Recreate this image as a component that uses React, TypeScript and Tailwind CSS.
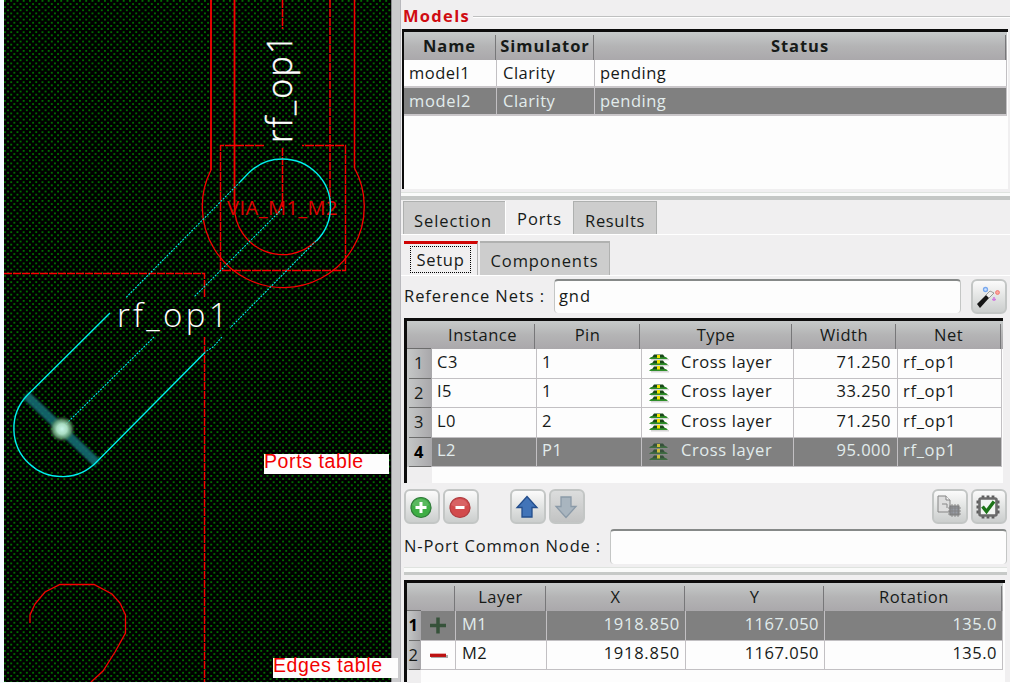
import React from "react";

const HEAD = "bg-gradient-to-b from-[#c6caca] via-[#b4b4b5] to-[#aaa8ab]";

function HeadCell({ w, children, bold }: { w: string; children?: React.ReactNode; bold?: boolean }) {
  return (
    <div className={`${w} flex h-full shrink-0 items-end`}>
      <div className={`flex h-full flex-1 items-center justify-center ${bold ? "font-bold" : ""}`}>{children}</div>
      <div className="mr-px h-[25px] w-px bg-[#777779]" />
    </div>
  );
}

function Cell({ w, children, right, sel }: { w: string; children?: React.ReactNode; right?: boolean; sel?: boolean }) {
  return (
    <div
      className={`${w} flex h-full shrink-0 items-center overflow-hidden border-r border-[#c2c0c3] whitespace-pre ${
        right ? "justify-end pr-[6px]" : "pl-[5px]"
      } ${sel ? "bg-[#808080] text-[#e2ecec]" : "bg-[#fdfdfd]"}`}
    >
      {children}
    </div>
  );
}

function RowHead({ w, children, bold }: { w: string; children: React.ReactNode; bold?: boolean }) {
  return (
    <div className={`${w} h-full shrink-0 bg-gradient-to-r from-[#c6c8c8] to-[#a8a7aa] pl-[2px] pr-px`}>
      <div className={`flex h-full items-center justify-center border-b border-[#6c6c6c] pr-[2px] ${bold ? "font-bold text-black" : ""}`}>
        {children}
      </div>
    </div>
  );
}

function ToolButton({ children, dim }: { children: React.ReactNode; dim?: boolean }) {
  return (
    <div
      className={`flex h-[35px] w-[36px] shrink-0 items-center justify-center rounded-[6px] border-2 border-[#c3c6c5] bg-gradient-to-b ${
        dim ? "from-[#dcdddd] to-[#c2c3c3]" : "from-[#fbfbfb] to-[#cbcecd]"
      }`}
    >
      {children}
    </div>
  );
}

function LayersIcon({ dim }: { dim?: boolean }) {
  const g = dim ? "#3f6b42" : "#2f8f2a";
  const d = dim ? "#36513a" : "#184818";
  const y = dim ? "#cfc03a" : "#f5e400";
  return (
    <svg width="22" height="20" viewBox="0 0 22 20" className="shrink-0">
      <path d="M3 6h18v1.200H3zM3 12h18v1.200H3zM3 18h18v1.500H3z" fill="#999" opacity={dim ? ".2" : ".4"} />
      <path d="M3 4h15l2 2H1zM3 10h15l2 2H1zM3 16h15l2 2H1z" fill={g} />
      <path d="M6 1.500h9l2 2.700H4zM6 7.500h9l2 2.700H4zM6 13.500h9l2 2.700H4z" fill={d} />
      <path d="M9 2h3v3H9zM9 7h3v3.500H9zM9 13h3v3.500H9z" fill={y} />
    </svg>
  );
}

function Wand() {
  return (
    <svg width="26" height="26" viewBox="0 0 26 26" className="-ml-1 mb-px shrink-0">
      <path d="M3 21L12 12l3 3L6 25z" fill="#151515" />
      <path d="M12 12l4-4 4 2-5 5z" fill="#eee" stroke="#777" strokeWidth=".7" />
      <circle cx="11.500" cy="6.500" r="2" fill="#cfe3ff" stroke="#78a8ee" strokeWidth="1.300" />
      <circle cx="23.500" cy="9.500" r="1.900" fill="#ffa69e" stroke="#f07770" strokeWidth="1" />
      <path d="M20 14v4M18 16.500h4" stroke="#d07be0" strokeWidth="1.500" />
    </svg>
  );
}

function Badge({ minus }: { minus?: boolean }) {
  return (
    <svg width="24" height="24" viewBox="0 0 24 24" className="-ml-[2px]">
      <circle cx="12" cy="12.500" r="10" fill={minus ? "#d24a4c" : "#3fae45"} stroke={minus ? "#b03c40" : "#2f7a39"} strokeWidth="1.200" />
      <path d="M3 10a9 9 0 0 1 17 0q-8 5-17 0z" fill="#fff" opacity=".14" />
      <path d={minus ? "M7.500 12.500h9" : "M6.500 12.500h11M12 7v11"} stroke="#fff" strokeWidth="3" />
    </svg>
  );
}

function Arrow({ down }: { down?: boolean }) {
  return (
    <svg width="24" height="24" viewBox="0 0 24 24" className={`-ml-[2px] ${down ? "rotate-180" : ""}`}>
      <path
        d="M12 1.500L22 12.500h-5V22H7v-9.500H2z"
        fill={down ? "#a9b5bf" : "#4274b8"}
        stroke={down ? "#8b9aa8" : "#234d8c"}
        strokeWidth="1.300"
      />
    </svg>
  );
}

function CopyChip() {
  return (
    <svg width="26" height="24" viewBox="0 0 26 24" className="-ml-[2px] mb-[2px]">
      <path d="M2 2h8l4 4v12H2z" fill="#dedede" stroke="#858585" />
      <path d="M10 2v4h4" fill="#f4f4f4" stroke="#858585" />
      <path d="M6 10h5v4" fill="none" stroke="#888" />
      <rect x="14" y="12" width="9" height="9" fill="#969ba4" stroke="#777" />
      <path d="M12 14h13M12 17h13M12 20h13M16 10v13M19 10v13M22 10v13" stroke="#858585" strokeWidth=".9" />
    </svg>
  );
}

function ChipCheck() {
  return (
    <svg width="26" height="26" viewBox="0 0 26 26" className="-ml-[2px]">
      <path d="M8 1.500v23M13 1.500v23M18 1.500v23M1.500 8h23M1.500 13h23M1.500 18h23" stroke="#5c5c5c" strokeWidth="2.800" />
      <rect x="4.500" y="4.500" width="17" height="17" rx="1.500" fill="#f3f5f3" stroke="#6a6a6a" strokeWidth="2.600" />
      <path d="M7.500 12.500l4 5L19 7.500" fill="none" stroke="#1c7417" strokeWidth="3.400" />
    </svg>
  );
}

function Layout() {
  const dots: React.ReactNode[] = [];
  for (let r = 0; r < 8; r++)
    for (let c = 0; c < 4; c++)
      dots.push(<rect key={`${r}-${c}`} x={c * 6.25 + (r % 2 ? 3.125 : 0)} y={r * 3.125} width="1.9" height="1.8" fill="#006c00" />);
  return (
    <svg width="387" height="682" viewBox="4 0 387 682" className="block">
      <defs>
        <pattern id="dots" x="4" y="0" width="25" height="25" patternUnits="userSpaceOnUse">
          {dots}
        </pattern>
        <radialGradient id="glow">
          <stop offset="0" stopColor="#c8f5ea" />
          <stop offset=".4" stopColor="#a9dcc2" />
          <stop offset=".7" stopColor="#6fa57e" stopOpacity=".8" />
          <stop offset="1" stopColor="#3c6b46" stopOpacity="0" />
        </radialGradient>
        <filter id="soft">
          <feGaussianBlur stdDeviation="1.2" />
        </filter>
      </defs>
      <rect x="4" width="387" height="682" fill="#000" />
      <rect x="4" width="387" height="682" fill="url(#dots)" />
      <g fill="none" stroke="#f80000" strokeWidth="1.3">
        <path d="M211 0V170M234.500 0V207" strokeWidth="1.800" />
        <path d="M354.500 0V168" strokeWidth="1.500" />
        <path d="M282.500 0V29M282.500 148V207M330 0V207" strokeDasharray="8 1" strokeWidth="1.500" />
        <path d="M264 145.500H220.500V270.500H345.500V145.500H302" strokeDasharray="9 1" strokeWidth="1.400" />
        <path d="M211 170A81 81 0 1 0 354.500 168" />
        <path d="M234.500 207A48 48 0 0 0 316 241" />
        <path d="M4 273.500H204.500V298M204.500 337V682" strokeDasharray="8 1" strokeWidth="1.400" />
        <path d="M30 623V615L35 604L45 592L60 584.500H94L112 594L120 603L125.500 615V633L115 652L103 671L91 682" />
      </g>
      <text x="227" y="215" textLength="111" lengthAdjust="spacingAndGlyphs" fill="#e00000" fontFamily="Open Sans, sans-serif" fontSize="19.5">
        VIA_M1_M2
      </text>
      <path d="M26 395L97 463" stroke="#187078" strokeWidth="9" opacity=".85" filter="url(#soft)" />
      <g fill="none" stroke="#00eeee" strokeWidth="1.4">
        <path d="M240 182L248.600 173A48 48 0 0 1 316.400 241" />
        <path d="M110 313L27 395.500A47.500 47.500 0 1 0 97 461.500L205 352.500" />
        <path d="M240 182L126 297.500M282 209L194 297M154 337L66 424M316 241L230 328M222 337L213 347L205 352" strokeDasharray="2 1.200" strokeWidth="1.100" />
      </g>
      <circle cx="62" cy="429" r="13" fill="url(#glow)" />
      <text x="117" y="327" textLength="111" fill="#fff" fontFamily="Open Sans, sans-serif" fontWeight="300" fontSize="33">
        rf_op1
      </text>
      <text transform="translate(292 143) rotate(-90)" textLength="109" fill="#fff" stroke="#fff" strokeWidth=".4" fontFamily="Open Sans, sans-serif" fontWeight="300" fontSize="34">
        rf_op1
      </text>
    </svg>
  );
}

const ports = [
  ["1", "C3", "1", "71.250"],
  ["2", "I5", "1", "33.250"],
  ["3", "L0", "2", "71.250"],
  ["4", "L2", "P1", "95.000"],
];

export default function App() {
  return (
    <div className="flex h-[683px] w-[1015px] overflow-hidden bg-white font-['Open_Sans',sans-serif] text-[16.5px] leading-none tracking-[0.5px] text-[#161a18]">
      <div className="relative w-[391px] shrink-0 bg-[#f4faff] pl-1">
        <Layout />
        <div className="absolute top-[454px] left-[264px] h-[20px] w-[125px] bg-[#fdfdfd] font-['Liberation_Sans',sans-serif] text-[19.5px] leading-[15px] tracking-[0.6px] text-[#f20000]">
          Ports table
        </div>
        <div className="absolute top-[658px] left-[273px] z-10 h-[20px] w-[125px] bg-[#fdfdfd] font-['Liberation_Sans',sans-serif] text-[19.5px] leading-[15px] tracking-[0.6px] text-[#f20000]">
          Edges table
        </div>
      </div>
      <div className="h-[682px] w-[10px] shrink-0 border-r border-l border-r-[#b8b8bc] border-l-[#8e8e92] bg-[#cbcbcd]" />

      <div className="flex h-[682px] w-[609px] shrink-0 flex-col bg-[#f0eff0]">
        <div className="flex h-[29px] items-center pt-[4px] pl-[2px]">
          <span className="w-[70px] font-bold tracking-[1.3px] text-[#d00c12]">Models</span>
          <span className="h-[2px] flex-1 border-t border-[#bfc0c0] bg-white" />
        </div>

        <div className="ml-px h-[160px] w-[606px] border-t-[3px] border-l-2 border-[#0c0c0c] bg-[#fdfdfd]">
          <div className={`flex h-[28px] w-[603px] ${HEAD} tracking-[0.95px]`}>
            <HeadCell w="w-[93px]" bold>Name</HeadCell>
            <HeadCell w="w-[98px]" bold>Simulator</HeadCell>
            <HeadCell w="w-[412px]" bold>Status</HeadCell>
          </div>
          <div className="flex h-[28px] w-[603px] border-b-2 border-[#cac7ca]">
            <Cell w="w-[93px]">model1</Cell>
            <Cell w="w-[98px]"><span className="pl-px">Clarity</span></Cell>
            <Cell w="w-[412px]">pending</Cell>
          </div>
          <div className="flex h-[28px] w-[603px] border-b-2 border-[#cac7ca]">
            <Cell w="w-[93px]" sel><span className="tracking-[0.65px]">model2</span></Cell>
            <Cell w="w-[98px]" sel><span className="pl-px">Clarity</span></Cell>
            <Cell w="w-[412px]" sel>pending</Cell>
          </div>
        </div>
        <div className="h-[12px] pt-[3px]">
          <div className="h-[4px] border-t border-[#dfe3df] bg-[#fafbfa]" />
          <div className="h-[4px] bg-[#c4c7c5]" />
        </div>

        <div className="flex h-[34px] items-end border-b border-white pl-[2px] tracking-[0.9px]">
          <div className="flex h-[33px] w-[102px] items-center justify-center border-t border-l border-[#aeb0af] bg-[#cdcdcd] pt-[7px] pr-[3px]">Selection</div>
          <div className="flex h-[33px] w-[68px] items-center justify-center border-l border-white pt-[3px]">Ports</div>
          <div className="flex h-[33px] w-[84px] items-center justify-center border-t border-x border-[#aeb0af] bg-[#cdcdcd] pt-[7px] tracking-[0.65px]">Results</div>
        </div>

        <div className="mt-[6px] flex h-[35px] items-end border-b border-white pl-[3px] tracking-[0.9px]">
          <div className="h-[34px] w-[74px] border-t-[3px] border-r border-t-[#cf0505] border-r-[#b0b0b0] pt-[2px] pl-[6px]">
            <div className="flex h-[27px] w-[61px] items-center justify-center border border-dotted border-black pt-px tracking-[0.75px]">Setup</div>
          </div>
          <div className="ml-[2px] flex h-[34px] w-[130px] items-center justify-center border-t-2 border-r border-[#b0b1b0] bg-[#cdcdcd] pt-[5px]">Components</div>
        </div>

        <div className="mt-[3px] flex h-[34px] items-center pl-[3px]">
          <span className="w-[150px] whitespace-pre tracking-[0.95px]">Reference Nets :</span>
          <div className="flex h-[34px] w-[407px] items-center rounded-[4px] border-t-2 border-x border-t-[#868988] border-x-[#c4c6c5] bg-[#fdfdfd] pb-[2px] pl-1 tracking-[0.9px]">gnd</div>
          <div className="ml-[10px]"><ToolButton><Wand /></ToolButton></div>
        </div>

        <div className="mt-[5px] ml-[3px] h-[165px] w-[599px] border-t-[3px] border-l-[3px] border-[#0c0c0c] bg-[#fdfdfd]">
          <div className={`flex h-[28px] w-[596px] ${HEAD}`}>
            <div className="w-[24px] shrink-0 self-end border-b border-[#6c6c6c]" />
            <HeadCell w="w-[105px]">Instance</HeadCell>
            <HeadCell w="w-[105px]">Pin</HeadCell>
            <HeadCell w="w-[152px]">Type</HeadCell>
            <HeadCell w="w-[104px]">Width</HeadCell>
            <HeadCell w="w-[105px]">Net</HeadCell>
          </div>
          {ports.map((p, i) => {
            const sel = i === 3;
            return (
              <div key={p[0]} className="flex h-[29.5px] w-[595px]">
                <RowHead w="w-[25px]" bold={sel}>{p[0]}</RowHead>
                <div className="flex flex-1 border-b border-[#c2c0c3]">
                  <Cell w="w-[105px]" sel={sel}><span className="pb-[3px]">{p[1]}</span></Cell>
                  <Cell w="w-[105px]" sel={sel}><span className="pb-[3px]">{p[2]}</span></Cell>
                  <Cell w="w-[152px]" sel={sel}>
                    <span className="pl-px"><LayersIcon dim={sel} /></span>
                    <span className="pb-[3px] pl-[11px] tracking-[0.6px]">Cross layer</span>
                  </Cell>
                  <Cell w="w-[104px]" sel={sel} right><span className="pb-[3px]">{p[3]}</span></Cell>
                  <Cell w="w-[104px]" sel={sel}><span className="pb-[3px] tracking-[0.7px]">rf_op1</span></Cell>
                </div>
              </div>
            );
          })}
          <div className="h-[16px] w-[25px] bg-[#efeeef]" />
        </div>

        <div className="mt-[6px] flex h-[35px] pl-[3px]">
          <ToolButton><Badge /></ToolButton>
          <div className="ml-[3px]"><ToolButton><Badge minus /></ToolButton></div>
          <div className="ml-[31px]"><ToolButton><Arrow /></ToolButton></div>
          <div className="ml-[3px]"><ToolButton dim><Arrow down /></ToolButton></div>
          <div className="ml-auto"><ToolButton><CopyChip /></ToolButton></div>
          <div className="mr-[3px] ml-[3px]"><ToolButton><ChipCheck /></ToolButton></div>
        </div>

        <div className="mt-[5px] flex h-[35px] items-center pl-[3px]">
          <span className="w-[206px] whitespace-pre tracking-[0.85px]">N-Port Common Node :</span>
          <div className="h-[35px] w-[397px] rounded-[4px] border-t-2 border-x border-t-[#868988] border-x-[#c4c6c5] bg-[#fdfdfd]" />
        </div>
        <div className="mt-[3px] ml-[3px] h-[5px] w-[603px] border-t border-[#dfe3df] bg-[#fafbfa]" />
        <div className="ml-[3px] h-[3px] w-[603px] bg-[#c6c9c7]" />

        <div className="mt-[5px] ml-[3px] h-[102px] w-[601px] border-t-[3px] border-l-[3px] border-[#0c0c0c] bg-[#fdfdfd]">
          <div className={`flex h-[28px] w-[596px] ${HEAD}`}>
            <div className="w-[14px] shrink-0 self-end border-b border-[#6c6c6c]" />
            <HeadCell w="w-[35px]" />
            <HeadCell w="w-[91px]">Layer</HeadCell>
            <HeadCell w="w-[139px]">X</HeadCell>
            <HeadCell w="w-[139px]">Y</HeadCell>
            <HeadCell w="w-[178px]"><span className="pl-[2px] tracking-[0.6px]">Rotation</span></HeadCell>
          </div>
          {["M1", "M2"].map((m, i) => (
            <div key={m} className="flex h-[29.5px] w-[596px]">
              <RowHead w="w-[14px]" bold={i === 0}>{i + 1}</RowHead>
              <div className="flex flex-1 border-b border-[#c2c0c3]">
                <Cell w="w-[35px]" sel={i === 0}>
                  <svg width="24" height="20" viewBox="0 0 24 20" className="ml-[2px] shrink-0">
                    {i === 0 ? (
                      <path d="M2 10.500h16M10 2.500v16" stroke="#36523a" strokeWidth="3.500" />
                    ) : (
                      <>
                        <path d="M3 11.500h17" stroke="#aaa" strokeWidth="3" />
                        <path d="M2 10.300h16" stroke="#bd1111" strokeWidth="3.300" />
                      </>
                    )}
                  </svg>
                </Cell>
                <Cell w="w-[91px]" sel={i === 0}><span className="pb-[3px] pl-px">{m}</span></Cell>
                <Cell w="w-[139px]" sel={i === 0} right><span className="-mr-px pb-[3px] tracking-[0.75px]">1918.850</span></Cell>
                <Cell w="w-[139px]" sel={i === 0} right><span className="-mr-px pb-[3px]">1167.050</span></Cell>
                <Cell w="w-[178px]" sel={i === 0} right><span className="-mr-px pb-[3px]">135.0</span></Cell>
              </div>
            </div>
          ))}
          <div className="h-[20px] w-[14px] bg-[#efeeef]" />
        </div>
      </div>
    </div>
  );
}
